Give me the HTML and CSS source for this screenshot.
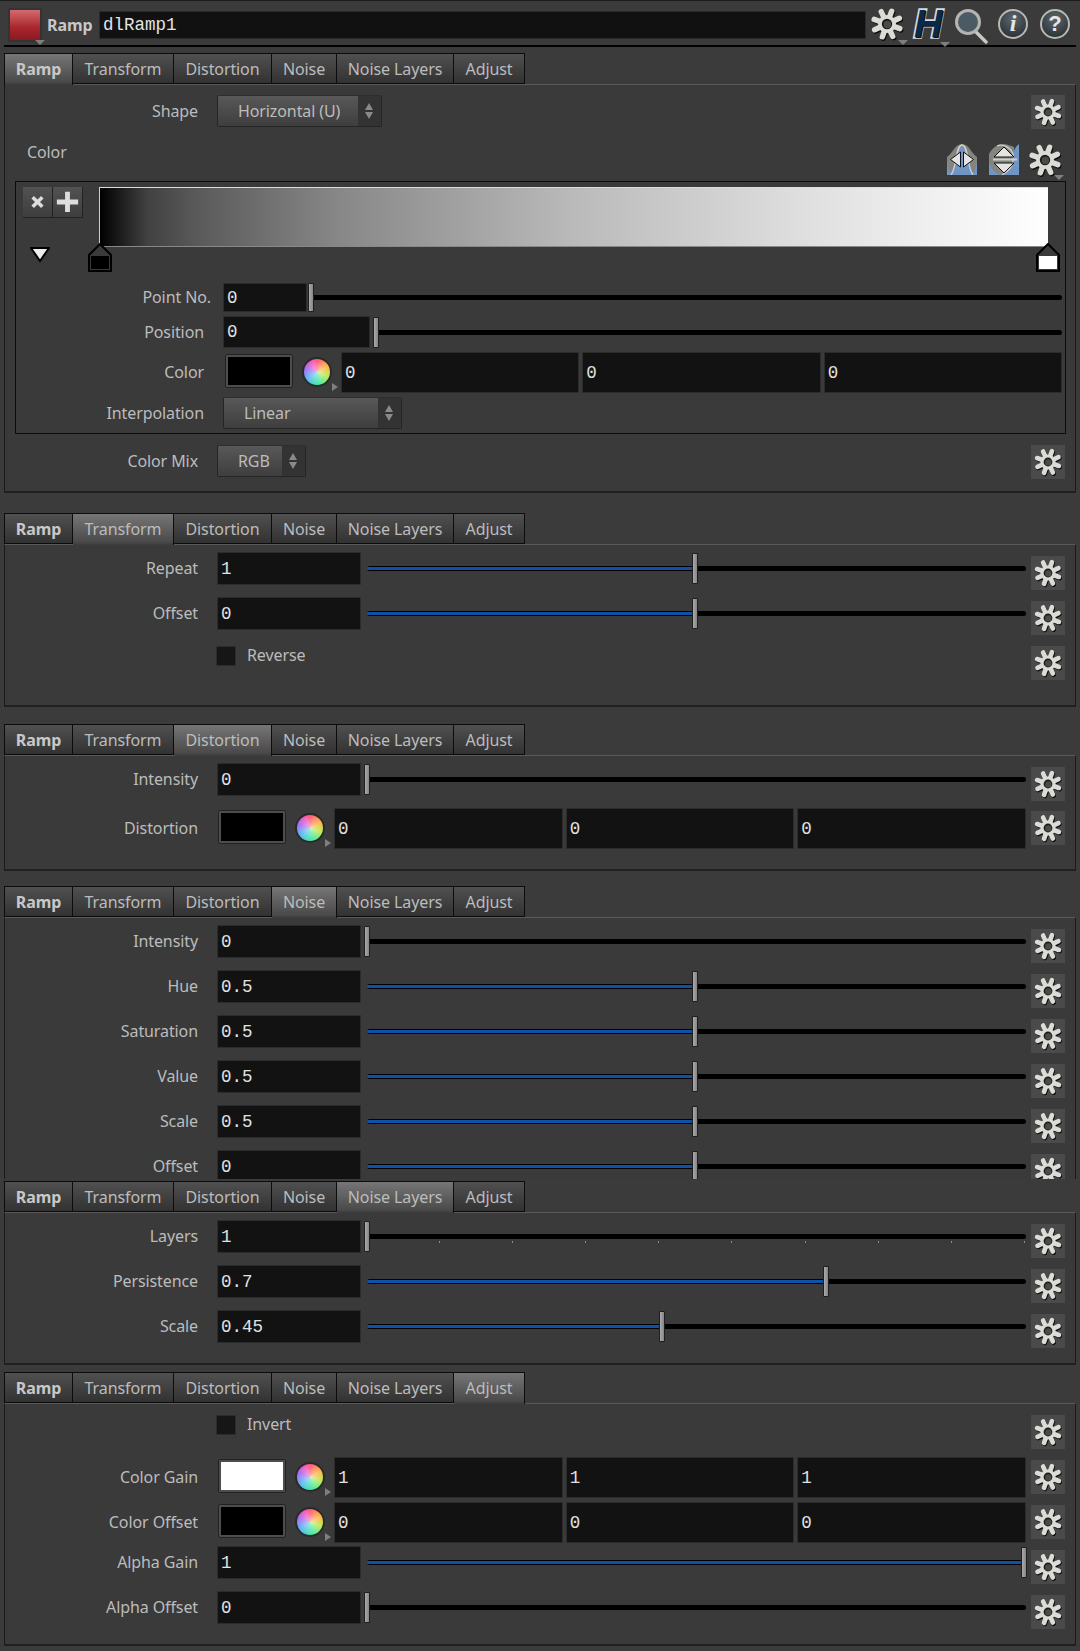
FILE: index.html
```html
<!DOCTYPE html>
<html lang="en">

<head>
  <meta charset="UTF-8">
  <title>dlRamp1</title>
  <link rel="stylesheet" href="styles.css">
</head>

<body>
  <svg class="defs" xmlns="http://www.w3.org/2000/svg">
    <g id="petals" stroke-width="4.6" stroke-linecap="round">
      <line x1="17" y1="17" x2="17" y2="5.4" transform="rotate(20 17 17)" />
      <line x1="17" y1="17" x2="17" y2="5.4" transform="rotate(65 17 17)" />
      <line x1="17" y1="17" x2="17" y2="5.4" transform="rotate(110 17 17)" />
      <line x1="17" y1="17" x2="17" y2="5.4" transform="rotate(155 17 17)" />
      <line x1="17" y1="17" x2="17" y2="5.4" transform="rotate(200 17 17)" />
      <line x1="17" y1="17" x2="17" y2="5.4" transform="rotate(245 17 17)" />
      <line x1="17" y1="17" x2="17" y2="5.4" transform="rotate(290 17 17)" />
      <line x1="17" y1="17" x2="17" y2="5.4" transform="rotate(335 17 17)" />
    </g>
    <symbol id="gear" viewBox="0 0 34 34">
      <use href="#petals" stroke="#0c0c0c" transform="translate(.8 1.1)" />
      <use href="#petals" stroke="#dcdcd6" />
      <circle cx="17" cy="17" r="7.6" fill="#dcdcd6" />
      <circle cx="17" cy="17" r="4.4" fill="#1c1c1c" />
      <circle cx="17.3" cy="17.4" r="3.2" fill="#4a4a4a" />
    </symbol>
  </svg>

  <header class="topbar">
    <div class="node-swatch"><i class="menu-arrow"></i></div>
    <div class="node-type">Ramp</div>
    <div class="node-name">dlRamp1</div>
    <div class="top-gear"><svg class="gear-big"><use href="#gear" /></svg><i class="menu-arrow"></i></div>
    <div class="h-logo">H<i class="menu-arrow"></i></div>
    <svg class="top-icon mag" viewBox="0 0 34 36">
      <line x1="21" y1="23" x2="32" y2="34" stroke="#c8c8c4" stroke-width="3.4" stroke-linecap="round" />
      <circle cx="14" cy="14" r="11.5" fill="#4c5a64" stroke="#b4b4b0" stroke-width="3" />
    </svg>
    <div class="round-btn info">i</div>
    <div class="round-btn help">?</div>
  </header>

  <section class="sec sec-ramp">
    <nav class="tabs">
      <span class="tab bold on">Ramp</span><span class="tab">Transform</span><span class="tab">Distortion</span><span class="tab">Noise</span><span class="tab">Noise Layers</span><span class="tab">Adjust</span>
    </nav>
    <div class="body">
      <div class="row flush">
        <label>Shape</label>
        <div class="drop w-shape"><span>Horizontal (U)</span><i class="updown"></i></div>
        <span class="spacer"></span>
        <div class="gear"><svg><use href="#gear" /></svg></div>
      </div>

      <div class="color-head">
        <span class="color-title">Color</span>
        <svg class="ramp-icon" viewBox="0 0 30 31">
          <rect width="30" height="31" fill="#3a3a3a" />
          <path d="M0 31V13C6 9 8 0 15 0S24 9 30 13V31Z" fill="#85857f" />
          <path d="M1 31C7 26 9 18 10 12 11 6 13 3 15 3S19 6 20 12C21 18 23 26 29 31Z" fill="#6f96c4" />
          <path d="M0 18V31H4C2 28 1 22 0 18ZM30 18V31H26C28 28 29 22 30 18Z" fill="#6f96c4" />
          <path d="M15 1C8 2 10 24 4 31M15 1C22 2 20 24 26 31" fill="none" stroke="#cfcfcb" stroke-width="1.3" />
          <path d="M13.5 8V23L3.5 15.5Z" fill="#e4e4e4" stroke="#111" />
          <path d="M16.5 8V23L26.5 15.5Z" fill="#e4e4e4" stroke="#111" />
        </svg>
        <svg class="ramp-icon second" viewBox="0 0 30 31">
          <rect width="30" height="31" fill="#3a3a3a" />
          <path d="M0 31V10C4 3 9 0 14 0 18 0 22 2 25 3V31Z" fill="#85857f" />
          <path d="M30 0V31H14C20 28 24 24 24 16 24 8 25 4 30 0Z" fill="#6f96c4" />
          <path d="M0 19C3 26 8 31 12 31H0Z" fill="#6f96c4" />
          <path d="M8 2C14 -1 22 4 24 10 26 20 20 27 13 31" fill="none" stroke="#cfcfcb" stroke-width="1.3" />
          <path d="M4 15.5H28" stroke="#cfcfcb" stroke-width="2" />
          <path d="M15 3L25 13H5Z" fill="#e4e4e4" stroke="#111" />
          <path d="M15 29L25 19H5Z" fill="#e4e4e4" stroke="#111" />
        </svg>
        <div class="top-gear head-gear"><svg class="gear-big"><use href="#gear" /></svg><i class="menu-arrow"></i></div>
      </div>

      <div class="ramp-box">
        <div class="ramp-top">
          <div class="ramp-side">
            <div class="ramp-btns">
              <span class="ramp-btn"><svg viewBox="0 0 30 31"><path d="M10 10.5L20 20.5M20 10.5L10 20.5" stroke="#ddd" stroke-width="3.6" /></svg></span>
              <span class="ramp-btn"><svg viewBox="0 0 30 31"><path d="M15 5V26M4 15.5H26" stroke="#ddd" stroke-width="5" /></svg></span>
            </div>
            <svg class="ramp-tri" viewBox="0 0 20 16"><path d="M1 1H19L10 14Z" fill="#eee" stroke="#000" stroke-width="2" /></svg>
          </div>
          <div class="ramp-wrap">
            <div class="ramp-grad"></div>
            <svg class="ramp-key key-start" viewBox="0 0 24 29"><path d="M12 1L23 12V28H1V12Z" fill="#3a3a3a" stroke="#000" stroke-width="2" /><rect x="3" y="13" width="18" height="13" fill="#000" /></svg>
            <svg class="ramp-key key-end" viewBox="0 0 24 29"><path d="M12 1L23 12V28H1V12Z" fill="#3a3a3a" stroke="#000" stroke-width="2" /><rect x="3" y="13" width="18" height="13" fill="#fff" /></svg>
          </div>
        </div>

        <div class="ramp-row r-point">
          <label class="wide">Point No.</label>
          <div class="field w-point">0</div>
          <div class="slider"><div class="track"></div><div class="handle" style="left:0%"></div></div>
        </div>
        <div class="ramp-row r-pos">
          <label>Position</label>
          <div class="field w-pos">0</div>
          <div class="slider"><div class="track"></div><div class="handle" style="left:0%"></div></div>
        </div>
        <div class="ramp-row r-color">
          <label>Color</label>
          <div class="swatch"></div>
          <div class="wheel"><i class="wheel-arrow"></i></div>
          <div class="field grow">0</div>
          <div class="field grow">0</div>
          <div class="field grow">0</div>
        </div>
        <div class="ramp-row r-interp">
          <label>Interpolation</label>
          <div class="drop w-interp"><span>Linear</span><i class="updown"></i></div>
        </div>
      </div>

      <div class="row flush">
        <label>Color Mix</label>
        <div class="drop w-mix"><span>RGB</span><i class="updown"></i></div>
        <span class="spacer"></span>
        <div class="gear"><svg><use href="#gear" /></svg></div>
      </div>
    </div>
  </section>

  <section class="sec sec-transform">
    <nav class="tabs">
      <span class="tab bold">Ramp</span><span class="tab on">Transform</span><span class="tab">Distortion</span><span class="tab">Noise</span><span class="tab">Noise Layers</span><span class="tab">Adjust</span>
    </nav>
    <div class="body">
      <div class="row">
        <label>Repeat</label>
        <div class="field">1</div>
        <div class="slider"><div class="track"><div class="fill" style="width:49.7%"></div></div><div class="handle" style="left:49.7%"></div></div>
        <div class="gear"><svg><use href="#gear" /></svg></div>
      </div>
      <div class="row">
        <label>Offset</label>
        <div class="field">0</div>
        <div class="slider"><div class="track"><div class="fill" style="width:49.7%"></div></div><div class="handle" style="left:49.7%"></div></div>
        <div class="gear"><svg><use href="#gear" /></svg></div>
      </div>
      <div class="row">
        <label></label>
        <div class="check"></div>
        <span class="check-label">Reverse</span>
        <span class="spacer"></span>
        <div class="gear"><svg><use href="#gear" /></svg></div>
      </div>
    </div>
  </section>

  <section class="sec sec-distortion">
    <nav class="tabs">
      <span class="tab bold">Ramp</span><span class="tab">Transform</span><span class="tab on">Distortion</span><span class="tab">Noise</span><span class="tab">Noise Layers</span><span class="tab">Adjust</span>
    </nav>
    <div class="body">
      <div class="row">
        <label>Intensity</label>
        <div class="field">0</div>
        <div class="slider"><div class="track"></div><div class="handle" style="left:0%"></div></div>
        <div class="gear"><svg><use href="#gear" /></svg></div>
      </div>
      <div class="row color-row">
        <label>Distortion</label>
        <div class="swatch"></div>
        <div class="wheel"><i class="wheel-arrow"></i></div>
        <div class="field grow">0</div>
        <div class="field grow">0</div>
        <div class="field grow">0</div>
        <div class="gear"><svg><use href="#gear" /></svg></div>
      </div>
    </div>
  </section>

  <section class="sec sec-noise">
    <nav class="tabs">
      <span class="tab bold">Ramp</span><span class="tab">Transform</span><span class="tab">Distortion</span><span class="tab on">Noise</span><span class="tab">Noise Layers</span><span class="tab">Adjust</span>
    </nav>
    <div class="body">
      <div class="row">
        <label>Intensity</label>
        <div class="field">0</div>
        <div class="slider"><div class="track"></div><div class="handle" style="left:0%"></div></div>
        <div class="gear"><svg><use href="#gear" /></svg></div>
      </div>
      <div class="row">
        <label>Hue</label>
        <div class="field">0.5</div>
        <div class="slider"><div class="track"><div class="fill" style="width:49.7%"></div></div><div class="handle" style="left:49.7%"></div></div>
        <div class="gear"><svg><use href="#gear" /></svg></div>
      </div>
      <div class="row">
        <label>Saturation</label>
        <div class="field">0.5</div>
        <div class="slider"><div class="track"><div class="fill" style="width:49.7%"></div></div><div class="handle" style="left:49.7%"></div></div>
        <div class="gear"><svg><use href="#gear" /></svg></div>
      </div>
      <div class="row">
        <label>Value</label>
        <div class="field">0.5</div>
        <div class="slider"><div class="track"><div class="fill" style="width:49.7%"></div></div><div class="handle" style="left:49.7%"></div></div>
        <div class="gear"><svg><use href="#gear" /></svg></div>
      </div>
      <div class="row">
        <label>Scale</label>
        <div class="field">0.5</div>
        <div class="slider"><div class="track"><div class="fill" style="width:49.7%"></div></div><div class="handle" style="left:49.7%"></div></div>
        <div class="gear"><svg><use href="#gear" /></svg></div>
      </div>
      <div class="row">
        <label>Offset</label>
        <div class="field">0</div>
        <div class="slider"><div class="track"><div class="fill" style="width:49.7%"></div></div><div class="handle" style="left:49.7%"></div></div>
        <div class="gear"><svg><use href="#gear" /></svg></div>
      </div>
    </div>
  </section>

  <section class="sec sec-layers">
    <nav class="tabs">
      <span class="tab bold">Ramp</span><span class="tab">Transform</span><span class="tab">Distortion</span><span class="tab">Noise</span><span class="tab on">Noise Layers</span><span class="tab">Adjust</span>
    </nav>
    <div class="body">
      <div class="row">
        <label>Layers</label>
        <div class="field">1</div>
        <div class="slider"><div class="track"></div><div class="ticks"></div><div class="handle" style="left:0%"></div></div>
        <div class="gear"><svg><use href="#gear" /></svg></div>
      </div>
      <div class="row">
        <label>Persistence</label>
        <div class="field">0.7</div>
        <div class="slider"><div class="track"><div class="fill" style="width:69.7%"></div></div><div class="handle" style="left:69.7%"></div></div>
        <div class="gear"><svg><use href="#gear" /></svg></div>
      </div>
      <div class="row">
        <label>Scale</label>
        <div class="field">0.45</div>
        <div class="slider"><div class="track"><div class="fill" style="width:44.7%"></div></div><div class="handle" style="left:44.7%"></div></div>
        <div class="gear"><svg><use href="#gear" /></svg></div>
      </div>
    </div>
  </section>

  <section class="sec sec-adjust">
    <nav class="tabs">
      <span class="tab bold">Ramp</span><span class="tab">Transform</span><span class="tab">Distortion</span><span class="tab">Noise</span><span class="tab">Noise Layers</span><span class="tab on">Adjust</span>
    </nav>
    <div class="body">
      <div class="row invert-row">
        <label></label>
        <div class="check"></div>
        <span class="check-label">Invert</span>
        <span class="spacer"></span>
        <div class="gear"><svg><use href="#gear" /></svg></div>
      </div>
      <div class="row color-row tight">
        <label>Color Gain</label>
        <div class="swatch white"></div>
        <div class="wheel"><i class="wheel-arrow"></i></div>
        <div class="field grow">1</div>
        <div class="field grow">1</div>
        <div class="field grow">1</div>
        <div class="gear"><svg><use href="#gear" /></svg></div>
      </div>
      <div class="row color-row tight">
        <label>Color Offset</label>
        <div class="swatch"></div>
        <div class="wheel"><i class="wheel-arrow"></i></div>
        <div class="field grow">0</div>
        <div class="field grow">0</div>
        <div class="field grow">0</div>
        <div class="gear"><svg><use href="#gear" /></svg></div>
      </div>
      <div class="row">
        <label>Alpha Gain</label>
        <div class="field">1</div>
        <div class="slider"><div class="track"><div class="fill" style="width:100%"></div></div><div class="handle" style="left:99.7%"></div></div>
        <div class="gear"><svg><use href="#gear" /></svg></div>
      </div>
      <div class="row">
        <label>Alpha Offset</label>
        <div class="field">0</div>
        <div class="slider"><div class="track"></div><div class="handle" style="left:0%"></div></div>
        <div class="gear"><svg><use href="#gear" /></svg></div>
      </div>
    </div>
  </section>
</body>

</html>
```
FILE: styles.css
```css
* {
  box-sizing: border-box;
}

html,
body {
  margin: 0;
  height: 1651px;
  overflow: hidden;
}

body {
  background: #3b3b3b;
  font-family: 'Noto Sans', Arial, sans-serif;
  font-size: 16px;
  letter-spacing: -0.1px;
  color: #bcbcbc;
  border-top: 1px solid #1c1c1c;
}

.defs {
  position: absolute;
  width: 0;
  height: 0;
}

/* top bar */

.topbar {
  display: flex;
  align-items: flex-start;
  height: 46px;
  margin: 0 4px;
  padding: 9px 0 0 6px;
  border-bottom: 2px solid #000;
}

.node-swatch {
  position: relative;
  flex: none;
  width: 30px;
  height: 30px;
  margin-right: 7px;
  background: linear-gradient(#d46a6e, #a8252c 60%, #8a1a20);
  box-shadow: 0 0 0 2px #333;
}

.menu-arrow {
  position: absolute;
  right: -5px;
  bottom: -5px;
  width: 0;
  height: 0;
  border-left: 5px solid transparent;
  border-right: 5px solid transparent;
  border-top: 5px solid #7f7f7f;
}

.node-type {
  width: 52px;
  line-height: 30px;
  font-weight: 700;
  color: #c8c8c8;
}

.node-name {
  flex: none;
  width: 767px;
  height: 28px;
  margin-top: 1px;
  padding-left: 3px;
  background: #111;
  border: 1px solid #2b2b2b;
  font-family: 'Liberation Mono', monospace;
  font-size: 17.5px;
  line-height: 27px;
  letter-spacing: 0;
  color: #e4e4e4;
}

.top-gear {
  position: relative;
  flex: none;
  width: 32px;
  height: 32px;
  margin: -2px 0 0 5px;
}

.gear-big {
  display: block;
  width: 40px;
  height: 40px;
  margin: -4px;
}

.h-logo {
  position: relative;
  flex: none;
  width: 32px;
  height: 34px;
  margin: -3px 0 0 9px;
  padding-left: 2px;
  font-family: 'Liberation Sans', sans-serif;
  font-size: 39px;
  font-weight: 700;
  font-style: italic;
  line-height: 34px;
  letter-spacing: 0;
  color: #0a2a4c;
  -webkit-text-stroke: 3.5px #d8d8d8;
  paint-order: stroke fill;
  text-shadow: 1px 1px 0 #111;
}

.h-logo .menu-arrow {
  right: -6px;
  bottom: -6px;
}

.top-icon {
  flex: none;
  width: 34px;
  height: 36px;
  margin: -2px 0 0 10px;
}

.round-btn {
  flex: none;
  width: 30px;
  height: 30px;
  margin-top: -1px;
  border: 2px solid #b8b8b4;
  border-radius: 50%;
  background: radial-gradient(circle at 50% 30%, #5b666c, #23292d);
  text-align: center;
  line-height: 25px;
  letter-spacing: 0;
  color: #e6e6e6;
}

.info {
  margin-left: 10px;
  font-family: 'Liberation Serif', serif;
  font-size: 24px;
  font-style: italic;
  font-weight: 700;
}

.help {
  margin-left: 12px;
  font-family: 'Liberation Sans', sans-serif;
  font-size: 22px;
  font-weight: 700;
}

/* sections */

.sec {
  margin: 0 4px;
}

.sec-ramp {
  margin-top: 6px;
}

.sec-transform {
  margin-top: 20px;
}

.sec-distortion {
  margin-top: 17px;
}

.sec-noise {
  margin-top: 15px;
}

.sec-layers {
  margin-top: 2px;
}

.sec-adjust {
  margin-top: 7px;
}

.tabs {
  display: flex;
  height: 31px;
  padding-left: 1px;
}

.tab {
  height: 31px;
  background: linear-gradient(#505050, #323232);
  border-top: 1px solid #0c0c0c;
  border-right: 1px solid #0c0c0c;
  border-bottom: 1px solid #0c0c0c;
  text-align: center;
  line-height: 31px;
}

.tab:nth-child(1) {
  width: 69px;
  border-left: 1px solid #0c0c0c;
  margin-left: -1px;
}

.tab:nth-child(2) {
  width: 101px;
}

.tab:nth-child(3) {
  width: 98px;
}

.tab:nth-child(4) {
  width: 65px;
}

.tab:nth-child(5) {
  width: 117px;
}

.tab:nth-child(6) {
  width: 71px;
}

.tab.bold {
  font-weight: 700;
  color: #c8c8c8;
}

.tab.on {
  position: relative;
  height: 32px;
  background: linear-gradient(#767676, #4a4a4a 90%, #3b3b3b);
  border-bottom: 0;
}

.body {
  padding: 7px 10px 0 0;
  background: #3a3a3a;
  border-left: 1px solid #1a1a1a;
  border-right: 1px solid #1a1a1a;
  border-top: 1px solid #5a5a5a;
  border-bottom: 2px solid #202020;
}

.sec-ramp .body {
  height: 409px;
  padding-top: 10px;
}

.sec-transform .body {
  height: 163px;
}

.sec-distortion .body {
  height: 116px;
}

.sec-noise .body {
  height: 262px;
  overflow: hidden;
  border-bottom: 0;
}

.sec-layers .body {
  height: 153px;
}

.sec-adjust .body {
  height: 243px;
}

/* rows */

.row {
  display: flex;
  align-items: flex-start;
  height: 33px;
  margin-bottom: 12px;
}

label {
  flex: none;
  width: 193px;
  margin-right: 19px;
  text-align: right;
  white-space: nowrap;
  line-height: 33px;
}

.field {
  flex: none;
  width: 144px;
  height: 33px;
  padding-left: 3px;
  background: #121212;
  border: 1px solid #2c2c2c;
  font-family: 'Liberation Mono', monospace;
  font-size: 17.5px;
  line-height: 32px;
  letter-spacing: 0;
  color: #e2e2e2;
}

.field.grow {
  flex: 1;
  width: auto;
  height: 41px;
  margin-left: 3px;
  line-height: 40px;
}

.spacer {
  flex: 1;
}

.gear {
  flex: none;
  width: 34px;
  height: 34px;
  margin: 4px 0 0 5px;
  background: #4a4a4a;
}

.gear svg {
  display: block;
  width: 34px;
  height: 34px;
}

.flush {
  height: 34px;
}

.flush .gear {
  margin-top: 0;
}

.color-row {
  height: 41px;
}

.color-row label {
  line-height: 41px;
}

.color-row .gear {
  margin-top: 3px;
}

.tight {
  margin-bottom: 4px;
}

.tight + .tight {
  margin-bottom: 3px;
}

.invert-row {
  margin-bottom: 13px;
}

/* slider */

.slider {
  position: relative;
  flex: 1;
  height: 33px;
  margin-left: 6px;
}

.track {
  position: absolute;
  left: 0;
  right: 0;
  top: 14px;
  height: 5px;
  background: #000;
  border-radius: 3px;
  overflow: hidden;
}

.fill {
  height: 3px;
  margin-top: 1px;
  background: #0d52a6;
}

.handle {
  position: absolute;
  top: 1px;
  width: 6px;
  height: 31px;
  margin-left: -3px;
  background: linear-gradient(90deg, #aaa, #858585);
  border: 1px solid #1f1f1f;
  border-radius: 1px;
}

.ticks {
  position: absolute;
  left: 0;
  right: 0;
  top: 21px;
  height: 2px;
  background: repeating-linear-gradient(90deg, transparent 0 72px, #8a8a8a 72px 73.1px);
}

/* checkbox */

.check {
  flex: none;
  width: 20px;
  height: 20px;
  margin: 4px 0 0 -1px;
  background: #161616;
  border: 1px solid #2c2c2c;
}

.check-label {
  margin-left: 11px;
  line-height: 26px;
}

/* dropdowns */

.drop {
  position: relative;
  display: flex;
  flex: none;
  height: 32px;
  padding-left: 20px;
  background: linear-gradient(#585858, #3e3e3e);
  border: 1px solid #252525;
  border-top-color: #2e2e2e;
  border-radius: 2px;
  line-height: 30px;
}

.updown {
  position: absolute;
  right: 0;
  top: 0;
  bottom: 0;
  width: 23px;
  background: #333;
}

.updown::before,
.updown::after {
  content: '';
  position: absolute;
  left: 7px;
  border-left: 4.5px solid transparent;
  border-right: 4.5px solid transparent;
}

.updown::before {
  top: 7px;
  border-bottom: 7px solid #8a8a8a;
}

.updown::after {
  bottom: 7px;
  border-top: 7px solid #8a8a8a;
}

.w-shape {
  width: 165px;
}

.w-mix {
  width: 89px;
}

.w-interp {
  width: 179px;
}

/* color ramp */

.color-head {
  display: flex;
  align-items: flex-start;
  height: 31px;
  margin: 15px -7px 6px 0;
  padding: 0 11px 0 22px;
}

.color-title {
  flex: 1;
  line-height: 16px;
}

.ramp-icon {
  flex: none;
  width: 30px;
  height: 31px;
  margin-right: 12px;
}

.ramp-icon.second {
  margin-right: 10px;
}

.head-gear {
  margin: 0;
}

.head-gear .menu-arrow {
  right: -3px;
  bottom: -4px;
}

.ramp-box {
  height: 253px;
  margin: 0 -1px 11px 10px;
  padding: 5px 3px 0 0;
  border: 1px solid #0c0c0c;
}

.ramp-top {
  display: flex;
  height: 96px;
}

.ramp-side {
  flex: none;
  width: 83px;
  padding-left: 7px;
}

.ramp-btns {
  display: flex;
}

.ramp-btn {
  width: 30px;
  height: 31px;
  background: linear-gradient(#525252, #3e3e3e);
  border-right: 1px solid #222;
  border-bottom: 1px solid #222;
}

.ramp-btn svg {
  display: block;
}

.ramp-tri {
  display: block;
  width: 20px;
  height: 16px;
  margin: 29px 0 0 7px;
}

.ramp-wrap {
  position: relative;
  width: 949px;
}

.ramp-grad {
  height: 60px;
  background: linear-gradient(90deg, #000, #414141 5%, #595959 10%, #878787 25%, #bababa 50%, #e0e0e0 75%, #fff);
  border-top: 1px solid #ddd;
  border-left: 1px solid #ccc;
  border-bottom: 1px solid #888;
}

.ramp-key {
  position: absolute;
  top: 56px;
  width: 24px;
  height: 29px;
}

.key-start {
  left: -11px;
}

.key-end {
  right: -12px;
}

.ramp-row {
  display: flex;
  align-items: flex-start;
}

.ramp-row label {
  width: 188px;
  margin-right: 19px;
}

.ramp-row label.wide {
  width: 195px;
  margin-right: 12px;
}

.r-point {
  height: 29px;
  margin-bottom: 4px;
}

.r-point .field {
  height: 29px;
  line-height: 28px;
}

.r-point label {
  line-height: 29px;
}

.r-point .slider {
  height: 29px;
}

.r-point .track {
  top: 12px;
}

.r-point .handle {
  top: 0;
  height: 29px;
}

.w-point {
  width: 84px;
  margin-right: -2px;
}

.r-pos {
  height: 32px;
  margin-bottom: 4px;
}

.r-pos .field {
  height: 32px;
  line-height: 31px;
}

.r-pos label {
  line-height: 32px;
}

.r-pos .slider {
  height: 32px;
}

.r-pos .track {
  top: 14px;
}

.field.w-pos {
  width: 147px;
}

.r-color {
  height: 41px;
  margin-bottom: 4px;
}

.r-color label {
  line-height: 41px;
}

.r-interp {
  height: 32px;
}

.r-interp label {
  line-height: 32px;
}

/* color controls */

.swatch {
  flex: none;
  width: 68px;
  height: 34px;
  margin: 2px 0 0 1px;
  background: #000;
  border: 3px solid #4d4d4d;
  outline: 1px solid #222;
  outline-offset: -1px;
  border-radius: 2px;
}

.swatch.white {
  background: #fff;
}

.r-color .swatch {
  margin-left: 2px;
}

.wheel {
  position: relative;
  flex: none;
  width: 30px;
  height: 30px;
  margin: 5px 6px 0 9px;
  border: 2px solid #2a2a2a;
  border-radius: 50%;
  background:
    radial-gradient(circle, rgba(255, 255, 255, .55), rgba(255, 255, 255, 0) 75%),
    conic-gradient(#ff4d6d, #ffb03a 60deg, #b8e84a 110deg, #3ae8a0 170deg, #4ab8f0 230deg, #a060f0 290deg, #ff4db0 340deg, #ff4d6d);
}

.wheel-arrow {
  position: absolute;
  right: -8px;
  bottom: -6px;
  width: 0;
  height: 0;
  border-top: 4px solid transparent;
  border-bottom: 4px solid transparent;
  border-left: 6px solid #7f7f7f;
}
```
